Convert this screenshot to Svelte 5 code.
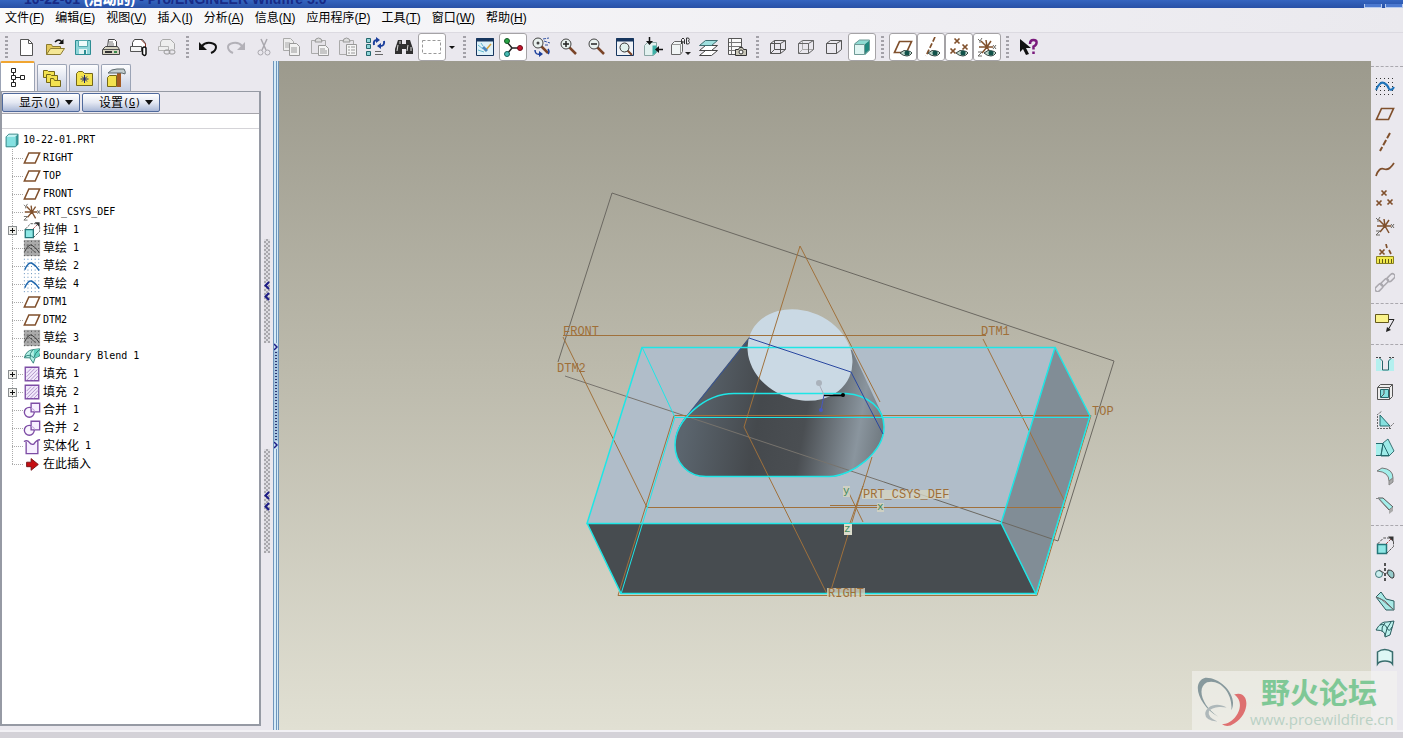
<script>
  const menus = [
    ['文件', 'F'],
    ['编辑', 'E'],
    ['视图', 'V'],
    ['插入', 'I'],
    ['分析', 'A'],
    ['信息', 'N'],
    ['应用程序', 'P'],
    ['工具', 'T'],
    ['窗口', 'W'],
    ['帮助', 'H'],
  ];

  const eye = '<path d="M7 16q4-4 8-2q3 0 4 2q-2 3-5 3q-4 0-7-3z" fill="#b9d3c8" stroke="#3b4a46"/><circle cx="14" cy="16" r="2.500" fill="#12524a"/>';
  const cross = (x, y, c = '#80502c') =>
    `<path d="M${x - 2.5} ${y - 2.5}l5 5m0-5l-5 5" stroke="${c}" stroke-width="1.700"/>`;
  const gridDots = (c) => `<g stroke="${c}" stroke-dasharray="1 3"><path d="M1 2.500h18M1 6.500h18M1 10.500h18M1 14.500h18M1 18.500h18"/></g>`;
  const csys = '<path d="M10 10L4 4M10 10L5 16M10 10h-8M10 10h6M10 10l4-6M10 10l4 7M10 10L9 3" stroke="#80502c" stroke-width="1.500"/><path d="M1 2l2 2 2-3M3 4v2M16 8l3 4m0-4l-3 4M1 15h4l-4 4h4" stroke="#6d6a64"/>';
  const lens = (x, y) => `<path d="M${x + 3} ${y + 3}l7 7" stroke="#7a4428" stroke-width="2.500"/><circle cx="${x}" cy="${y}" r="5" fill="#e9f1ee" stroke="#444"/>`;
  const plane = '<path d="M6.500 4.500h12l-5 11h-12z" stroke="#80502c" stroke-width="1.700"/>';

  // inner markup of every 20x20 icon
  const icons = {
    new: '<path d="M3.500 2.500h8l4 4v12h-12z" fill="#fff" stroke="#555"/><path d="M11.500 2.500v4h4" stroke="#555"/>',
    open: '<path d="M1.500 17.500v-10h5l1 2h8v3" fill="#e4c95c" stroke="#8b7a30"/><path d="M1.500 17.500l4-6h14l-4 6z" fill="#f5e795" stroke="#8b7a30"/><path d="M10 5q4-4 7 0" stroke="#111" stroke-width="1.500"/><path d="M18.500 2v5h-5z" fill="#111"/>',
    save: '<path d="M2.500 3.500h15v14h-15z" fill="#8fd5d9" stroke="#2d8d93"/><path d="M5.500 3.500h9v6h-9z" fill="#eefbfb" stroke="#55a9ae"/><path d="M6 12h8v5H6z" fill="#e3f3f3"/><path d="M11 13h2v4h-2z" fill="#2d8d93"/>',
    print: '<path d="M6.500 10.500l1-8h6l2 2v6" fill="#fff" stroke="#444"/><path d="M8 5h4M8 7h5M8 9h5" stroke="#777"/><path d="M1.500 12.500l3-3h12l2 3v5h-17z" fill="#d6d3c2" stroke="#444"/><path d="M2 12.500h16" stroke="#555"/><path d="M4 15h7" stroke="#333" stroke-width="2"/><path d="M13 15h3" stroke="#3b8a4b" stroke-width="2"/>',
    mail: '<path d="M3.500 9.500v-4l2-3h8l3 4v6h-4" fill="#fff" stroke="#444"/><path d="M1.500 9.500h11v5h-11z" fill="#f4f4f4" stroke="#555"/><path d="M12.500 3l4 4v3" stroke="#8a3526"/><path d="M13.500 17v-6q2-2 3.500 0v6q-1 3-3.500 0z" fill="#fff" stroke="#111" stroke-width="1.500"/>',
    link: '<path d="M3.500 10v-5l2-2.500h8l4 4v6" fill="#eee" stroke="#aaa"/><path d="M1.500 9.500h10v4h-10z" fill="#eee" stroke="#b5b5b5"/><rect x="7" y="13" width="6" height="4" rx="2" stroke="#999"/><rect x="12" y="13" width="6" height="4" rx="2" stroke="#999"/>',
    undo: '<path d="M4 9q3-4 9-3q5 1 5 4q0 4-5 6" stroke="#111" stroke-width="2"/><path d="M1 5v8h8z" fill="#111"/>',
    redo: '<path d="M16 9q-3-4-9-3q-5 1-5 4q0 4 5 6" stroke="#b3b1b8" stroke-width="2"/><path d="M19 5v8h-8z" fill="#b3b1b8"/>',
    cut: '<path d="M7 2l5 11M13 2L8 13" stroke="#a9a7ad" stroke-width="1.500"/><circle cx="6.500" cy="15.500" r="2.500" stroke="#a9a7ad"/><circle cx="13.500" cy="15.500" r="2.500" stroke="#a9a7ad"/>',
    copy: '<path d="M1.500 1.500h7l3 3v9h-10z" fill="#eee" stroke="#aaa"/><path d="M3 6h5M3 8h5M3 10h5" stroke="#aaa"/><path d="M7.500 6.500h7l3 3v9h-10z" fill="#f2f2f2" stroke="#999"/><path d="M9 11h6M9 13h6M9 15h6" stroke="#999"/>',
    paste: '<path d="M1.500 3.500h14v13h-14z" fill="#e6e4e9" stroke="#aaa"/><path d="M5 5q0-4 3.500-4t3.500 4z" fill="#ddd" stroke="#999"/><path d="M8.500 8.500h7l3 3v7h-10z" fill="#f5f5f5" stroke="#999"/><path d="M10 12h5M10 14h7M10 16h7" stroke="#999"/>',
    pasteSpecial: '<path d="M1.500 3.500h14v14h-14z" fill="#e6e4e9" stroke="#aaa"/><path d="M5 5q0-4 3.500-4t3.500 4z" fill="#ddd" stroke="#999"/><path d="M8.500 7.500h10v11h-10z" fill="#f5f5f5" stroke="#999"/><path d="M10 10h2M13 10h4M10 13h2M13 13h4M10 16h2M13 16h4" stroke="#999"/>',
    regen: '<path d="M.500 1.500h4v4h-4zM.500 7.500h4v4h-4zM.500 14.500h4v4h-4z" fill="#8fd5d9" stroke="#24676d"/><path d="M8 8q-1-5 3-5M18 4q1 5-4 5" stroke="#1b3f9c" stroke-width="2"/><path d="M10 0l4 3-4 3zM15 6l-4 3 4 3z" fill="#1b3f9c"/><path d="M9 14.500h6M9 17.500h8" stroke="#666"/>',
    find: '<path d="M4 3h4v4h4V3h4l3 9v5h-7v-5H8v5H1v-5z" fill="#303030"/><path d="M4 8l-1 6M14 8l-1 6M6 4v3M17 10v4" stroke="#ddd"/>',
    select: '<path d="M.500 3.500h18v13h-18z" stroke="#999" stroke-dasharray="3 2"/>',
    repaint: '<path d="M1.500 1.500h17v17h-17z" fill="#dff1f8" stroke="#17365f"/><path d="M1 3h18" stroke="#17365f" stroke-width="3"/><path d="M3 8l5 4M3 13l6 2M6 6l2 3" stroke="#62b8cf"/><path d="M10 14l6-7" stroke="#d69f39" stroke-width="1.500"/><path d="M7 11l4 4 2-2-4-4z" fill="#4a86bd"/>',
    spin: '<path d="M4 5l5 6M4 17l5-6M9 11h8" stroke="#222" stroke-width="1.500"/><circle cx="4" cy="4" r="2.500" fill="#26a444" stroke="#145726"/><circle cx="4" cy="17" r="2.500" fill="#48bdb5" stroke="#14605a"/><circle cx="17" cy="11" r="2.500" fill="#c4132b" stroke="#6d0917"/>',
    reorient: lens(7, 6) + '<circle cx="7" cy="6" r="1.500" fill="#444"/><path d="M12 2l6-1M13 4l6 2M14 8h4" stroke="#3455a5" stroke-dasharray="3 1"/><path d="M4 13q0 5 5 4M17 12q2 3 0 5" stroke="#1b3f9c" stroke-width="1.500"/><path d="M8 14l4 3-4 3z" fill="#1b3f9c"/>',
    zoomIn: lens(7, 7) + '<path d="M4 7h6M7 4v6" stroke="#222" stroke-width="1.500"/>',
    zoomOut: lens(7, 7) + '<path d="M4 7h6" stroke="#222" stroke-width="1.500"/>',
    refit: '<path d="M1.500 1.500h17v17h-17z" fill="#f0f3f7" stroke="#17365f"/><path d="M1 3h18" stroke="#17365f" stroke-width="3"/><path d="M12 13l5 5" stroke="#7a4428" stroke-width="2"/><circle cx="9.500" cy="10.500" r="4.500" fill="#e0f2ee" stroke="#333"/>',
    orient: '<path d="M1.500 8.500l3-3h9v10l-3 3h-9z" fill="#e2f1ef" stroke="#8aa5a3"/><path d="M9.500 8.500h4v7l-4 3z" fill="#3cb0a6"/><path d="M6.500 0v5M20 12.500h-5" stroke="#111" stroke-width="1.500"/><path d="M3 4h7L6.500 8zM16 9v7l-4-3.500z" fill="#111"/>',
    views: '<path d="M.500 7.500l3-3h8v10l-2 3h-9z" fill="#f1f5f5" stroke="#666"/><path d="M.500 7.500h9v10M9.500 7.500l2-3" stroke="#999"/><path d="M10.500 7V2.500q1.500-3 3 0V7M10.500 5h3M15.500 1v6h2q2-1.500 0-3q1.500-1.500 0-3z" stroke="#333"/><path d="M14 15h6l-3 3z" fill="#222"/>',
    layers: '<path d="M.500 18.500l6-5h12l-6 5z" fill="#fff" stroke="#444"/><path d="M.500 13.500l6-5h12l-6 5z" fill="#fff" stroke="#444"/><path d="M.500 8.500l6-5h12l-6 5z" fill="#9fe0df" stroke="#3d6d70"/>',
    viewMgr: '<path d="M1.500 1.500h13v16h-13z" fill="#fafafa" stroke="#555"/><path d="M4.500 2v15M2 5.500h12M2 9.500h12M2 13.500h8" stroke="#777"/><path d="M8.500 12.500h3l1-2h3l1 2h3v6h-11z" fill="#c9c7b8" stroke="#333"/><circle cx="14" cy="15" r="2" fill="#fff" stroke="#333"/>',
    wire: '<path d="M2.500 6.500h10v10h-10zM6.500 3.500h11v9h-11zM2.500 6.500l4-3M12.500 6.500l5-3M2.500 16.500l4-4M12.500 16.500l5-4" stroke="#555"/>',
    hidden: '<path d="M6.500 4v8.500h11M2.500 16.500l4-4" stroke="#aaa"/><path d="M2.500 6.500h10v10h-10zM2.500 6.500l4-3h11v9l-5 4M12.500 6.500l5-3" stroke="#666"/>',
    noHidden: '<path d="M2.500 6.500h10v10h-10zM2.500 6.500l4-3h11v9l-5 4M12.500 6.500l5-3" stroke="#555"/>',
    shaded: '<path d="M2 7h11v11H2z" fill="#dff5f2"/><path d="M2 7l5-4h11l-5 4z" fill="#8edbd3"/><path d="M13 7l5-4v10l-5 5z" fill="#21897f"/><path d="M2.500 7.500h10v10h-10zM2.500 7l5-4h10v10l-5 4" stroke="#6f9a96"/>',
    planes: plane + eye,
    axes: '<path d="M14 0L5 19" stroke="#80502c" stroke-width="1.700" stroke-dasharray="5 2"/>' + eye,
    points: cross(8, 4) + cross(4, 14) + cross(16, 10) + eye,
    csysEye: csys + eye,
    help: '<path d="M2 2v13l3-3 3 6 3-1-3-6h5z" fill="#111"/><path d="M12 7q0-4 3.500-4t3 3q0 2-3 3.500v3M15.500 14.500v2.500" stroke="#7a1a7c" stroke-width="2.500"/>',
    tree: '<path d="M3.500 1.500h4v4h-4zM3.500 8.500h4v4h-4zM3.500 15.500h4v4h-4zM12.500 8.500h4v4h-4zM5.500 5.500v3M5.500 12.500v3M7.500 10.500h5" stroke="#222"/>',
    folders: '<g fill="#f3e24f" stroke="#746719"><path d="M1.500 9.500v-7h4l1 1h6v6z"/><path d="M4.500 14.500v-8h4l1 1h6v7z"/><path d="M8.500 18.500v-8h3l1 2h6v6z"/></g>',
    favorites: '<path d="M2.500 17.500v-12l2-2h4l2 2h8v12z" fill="#f3e24f" stroke="#746719"/><path d="M10.500 7v8M6.500 11h8M8 8.500l5 5M13 8.500l-5 5" stroke="#1c2670"/>',
    hammer: '<path d="M1.500 18.500v-9l2-2h7v11z" fill="#f3e24f" stroke="#746719"/><path d="M11 5h4v14h-4z" fill="#a55b24"/><path d="M2 5q3-4 9-4h7q2 3 1 5l-3-1H9L5 5z" fill="#c3ced0" stroke="#5d696d"/>',
    part: '<path d="M3 6h11v12H3z" fill="#84e1e1"/><path d="M3 6l3-3h11l-3 3z" fill="#c6f5f5"/><path d="M14 6l3-3v12l-3 3z" fill="#37a0a0"/><path d="M3.500 6.500l3-3h10v11l-3 3h-10z" stroke="#3b8485"/>',
    plane,
    csys,
    extrude: '<path d="M2.500 9.500h9v9h-9z" fill="#8fe8e6" stroke="#24777a" stroke-width="1.500"/><path d="M2.500 9l6-6h7M11.500 18.500l7-7v-6" stroke="#555" stroke-dasharray="3 1"/><path d="M11 9l6-6" stroke="#a24a4a" stroke-dasharray="3 1"/><path d="M13 1.500h5.500V7z" fill="#333"/>',
    sketchHidden: '<path d="M1 1h18v18H1z" fill="#aaa"/>' + gridDots('#333') + '<path d="M2 14q4-9 8-7t8 8" stroke="#333"/><path d="M4 7l10 8" stroke="#555"/>',
    sketch: gridDots('#3d75ac') + '<path d="M2 14q4-9 8-7t8 8" stroke="#1f67ad" stroke-width="1.700"/>',
    blend: '<path d="M1.500 12q2-8 9-9l8-1q-2 4 0 8l-5 2-2 6-4-6z" fill="#b4f1e6" stroke="#287c74"/><path d="M12 3l6-1v8l-6 2z" fill="#63d3c2"/><path d="M2 11q5-4 10 1M11 3q-4 4-3 9M18 3q-5 4-6 9" stroke="#287c74"/>',
    fill: '<path d="M2.500 2.500h15v15h-15z" fill="#f1e8fb" stroke="#7d4ca5" stroke-width="1.500"/><path d="M4 9l5-5M4 13l9-9M4 17L16 5M8 17l9-9M12 17l5-5" stroke="#a88bc4"/>',
    merge: '<circle cx="7" cy="12.500" r="5.500" fill="#fbf7ff" stroke="#7d4ca5" stroke-width="1.500"/><path d="M9 2.500h9.500V12H9z" fill="#f7efff" stroke="#7d4ca5" stroke-width="1.500"/><path d="M9 8q4 1 4 4" stroke="#b99bd4"/>',
    solid: '<path d="M3.500 6.500v12h13v-12" fill="#f7efff"/><path d="M1 5q4-2 6 1t5 2q3-5 7-5M3.500 5.500v13h13v-14" stroke="#7d4ca5" stroke-width="1.500"/>',
    insert: '<path d="M4 8h5V4l8 6.500L9 17v-4H4z" fill="#c50e12" stroke="#721114"/>',
    rSketch: gridDots('#333') + '<path d="M1 14q4-9 8-7t5 6q3 2 5-2" stroke="#1d72b8" stroke-width="2"/>',
    axis: '<path d="M15 1L5 19" stroke="#80502c" stroke-width="2" stroke-dasharray="6 2"/>',
    curve: '<path d="M1 16q3-9 8-7t10-6" stroke="#80502c" stroke-width="1.700"/>',
    pts: cross(9, 5) + cross(4, 15) + cross(15, 14),
    measure: '<path d="M1.500 12.500h17v7h-17z" fill="#f1e94d" stroke="#8a8222"/><path d="M4.500 15v4M7.500 15v4M10.500 15v4M13.500 15v4M16.500 15v4" stroke="#635c14"/><path d="M11 0l1 4M14 6l2 4" stroke="#80502c" stroke-width="1.700"/>' + cross(7, 8),
    chain: '<g stroke="#aaa8ae" stroke-width="1.500"><rect x="-1" y="13" width="9" height="5" rx="2.500" transform="rotate(-45 4 15)"/><rect x="5" y="8" width="9" height="4" rx="2" transform="rotate(-45 10 10)"/><rect x="11" y="3" width="9" height="5" rx="2.500" transform="rotate(-45 16 5)"/></g>',
    note: '<path d="M.500 1.500h13v8h-13z" fill="#faf38a" stroke="#64591d"/><path d="M14 6.500h5L13 17" stroke="#222"/><path d="M12 14l-1 5 5-2z" fill="#222"/>',
    hole: '<path d="M1 5h5v11h8V5h5v12H1z" fill="#b4f0ef"/><path d="M1 3.500h5M14 3.500h5" stroke="#444" stroke-dasharray="2 1"/><path d="M4.500 4l3 3v9h6V7l3-3" stroke="#27666a"/>',
    shell: '<path d="M2.500 5.500l3-3h12v12l-3 3h-12z" fill="#ededed" stroke="#555"/><path d="M5.500 7.500h8v8h-8z" fill="#86e1df" stroke="#246a6d"/><path d="M2.500 5.500h12v12M14.500 5.500l3-3M6 15l3-3V8" stroke="#555"/>',
    rib: '<path d="M5 5v11h10z" fill="#86e1df" stroke="#246a6d"/><path d="M2.500 6v12.500H16M2 5l5-4M14 18l5-5" stroke="#666" stroke-dasharray="2 1"/>',
    draft: '<path d="M1 6h7v11H1z" fill="#a5efec"/><path d="M8 5l5-4 6 12-5 5H6z" fill="#9debe8" stroke="#3a7476"/><path d="M1 5.500h7l6 12M1 17.500h13M8 6L6 17" stroke="#246a6d"/>',
    round: '<path d="M2 5l5-3q11 1 11 10l-4 3q0-9-12-10z" fill="#a2eeea" stroke="#777"/><path d="M14 15l4-3v4l-4 3z" fill="#aaa" stroke="#888"/>',
    chamfer: '<path d="M3 4h5l10 9-4 3z" fill="#a2eeea" stroke="#555"/><path d="M14 16l4-3v4l-4 3z" fill="#aaa"/><path d="M1 4.500h3l10 11" stroke="#888"/>',
    mirror: '<path d="M10 0v20" stroke="#222" stroke-width="1.500" stroke-dasharray="3 2"/><circle cx="4" cy="11" r="3.500" fill="#c9eeee" stroke="#42777a"/><path d="M13 7q6 0 6 5t-4 2-2-7z" fill="#97cccc" stroke="#333"/><path d="M4 7l5 3M11 10h2" stroke="#555"/>',
    trim: '<path d="M1 6l5-5 5 7 8 2v9h-8z" fill="#a8e9e6" stroke="#285b5d"/><path d="M1 6l9 4 9 9L6 8z" fill="#fff" stroke="#6b6f70"/>',
    boundary: '<path d="M1 11q5-9 11-8l7-1-4 14-5 2q1-7-9-7z" fill="#bdf2ee" stroke="#285b5d"/><path d="M5 6q5-2 7 3t5-1M10 4q-4 4-3 8M16 3q-5 6-6 14" stroke="#285b5d"/>',
    patch: '<path d="M2.500 5q7-5 15 0v12q-2-3-7.500-3T2.500 17z" fill="#def7f5" stroke="#396d6e" stroke-width="1.500"/>',
  };

  const toolGroups = [
    ['new', 'open', 'save', 'print', 'mail', 'link'],
    ['undo', 'redo', 'cut', 'copy', 'paste', 'pasteSpecial', 'regen', 'find', 'select'],
    ['repaint', 'spin', 'reorient', 'zoomIn', 'zoomOut', 'refit', 'orient', 'views', 'layers', 'viewMgr'],
    ['wire', 'hidden', 'noHidden', 'shaded'],
    ['planes', 'axes', 'points', 'csysEye'],
    ['help'],
  ];

  let pressed = $state(['select', 'spin', 'shaded', 'planes', 'axes', 'points', 'csysEye']);

  const sideGroups = [
    ['rSketch', 'plane', 'axis', 'curve', 'pts', 'csys', 'measure', 'chain'],
    ['note'],
    ['hole', 'shell', 'rib', 'draft', 'round', 'chamfer'],
    ['extrude', 'mirror', 'trim', 'boundary', 'patch'],
  ];

  const tabs = ['tree', 'folders', 'favorites', 'hammer'];
  let activeTab = $state('tree');

  const features = [
    { icon: 'plane', name: 'RIGHT' },
    { icon: 'plane', name: 'TOP' },
    { icon: 'plane', name: 'FRONT' },
    { icon: 'csys', name: 'PRT_CSYS_DEF' },
    { icon: 'extrude', cn: '拉伸', name: ' 1', expandable: true },
    { icon: 'sketchHidden', cn: '草绘', name: ' 1' },
    { icon: 'sketch', cn: '草绘', name: ' 2' },
    { icon: 'sketch', cn: '草绘', name: ' 4' },
    { icon: 'plane', name: 'DTM1' },
    { icon: 'plane', name: 'DTM2' },
    { icon: 'sketchHidden', cn: '草绘', name: ' 3' },
    { icon: 'blend', name: 'Boundary Blend 1' },
    { icon: 'fill', cn: '填充', name: ' 1', expandable: true },
    { icon: 'fill', cn: '填充', name: ' 2', expandable: true },
    { icon: 'merge', cn: '合并', name: ' 1' },
    { icon: 'merge', cn: '合并', name: ' 2' },
    { icon: 'solid', cn: '实体化', name: ' 1' },
    { icon: 'insert', cn: '在此插入', name: '' },
  ];

  function toggle(name) {
    pressed = pressed.includes(name) ? pressed.filter((n) => n !== name) : [...pressed, name];
  }
</script>

{#snippet icon(name)}
  <svg class="icon" viewBox="0 0 20 20" fill="none" aria-hidden="true">{@html icons[name]}</svg>
{/snippet}

<div class="app">
  <header class="titlebar">
    <span class="title">10-22-01 <b>(活动的)</b> - Pro/ENGINEER Wildfire 5.0</span>
    <span class="window-buttons">
      <button aria-label="minimize"></button>
      <button aria-label="maximize"></button>
    </span>
  </header>

  <nav class="menubar">
    {#each menus as [label, key]}
      <button>{label}(<u>{key}</u>)</button>
    {/each}
  </nav>

  <div class="toolbar">
    {#each toolGroups as group}
      <div class="tool-group">
        <span class="grip"></span>
        {#each group as name}
          <button class="tool" class:on={pressed.includes(name)} aria-label={name} onclick={() => toggle(name)}>
            {@render icon(name)}
          </button>
          {#if name === 'select'}
            <button class="drop" aria-label="select options"><span class="caret small"></span></button>
          {/if}
        {/each}
      </div>
    {/each}
  </div>

  <main>
    <aside class="navigator">
      <div class="tabs">
        {#each tabs as tab}
          <button class="tab" class:active={activeTab === tab} aria-label={tab} onclick={() => (activeTab = tab)}>
            {@render icon(tab)}
          </button>
        {/each}
      </div>
      <div class="panel">
        <div class="panel-head">
          <button class="menu-button">显示<span class="key">(<u>O</u>)</span><span class="caret"></span></button>
          <button class="menu-button">设置<span class="key">(<u>G</u>)</span><span class="caret"></span></button>
        </div>
        <div class="column-head"></div>
        <ul class="model-tree">
          <li>{@render icon('part')}<span class="latin">10-22-01.PRT</span></li>
          {#each features as f}
            <li>
              <span class="branch">
                {#if f.expandable}<button class="expand" aria-label="expand"></button>{/if}
              </span>
              {@render icon(f.icon)}{#if f.cn}<span>{f.cn}</span>{/if}<span class="latin">{f.name}</span>
            </li>
          {/each}
        </ul>
      </div>
    </aside>

    <div class="gutter">
      {#each [0, 1] as i (i)}
        <div class="handle">
          <svg viewBox="0 0 6 22" fill="none"><path d="M5 2L1.500 5.500L5 9M5 13L1.500 16.500L5 20" stroke="#1b1b86" stroke-width="2" /></svg>
        </div>
      {/each}
    </div>
    <div class="sash">
      <div class="sash-handle">
        <svg viewBox="0 0 4 8" fill="none"><path d="M0 1L3 4L0 7" stroke="#1b1b86" stroke-width="1.500" /></svg>
        <svg viewBox="0 0 4 8" fill="none"><path d="M0 1L3 4L0 7" stroke="#1b1b86" stroke-width="1.500" /></svg>
      </div>
    </div>

    <section class="viewport">
      <svg class="scene" viewBox="279 61 1092 669" fill="none">
        <defs>
          <linearGradient id="body" gradientUnits="userSpaceOnUse" x1="690" y1="395" x2="890" y2="430">
            <stop offset="0" stop-color="#5b656e" />
            <stop offset="0.35" stop-color="#45494d" />
            <stop offset="0.58" stop-color="#4a4e52" />
            <stop offset="0.85" stop-color="#8a959e" />
            <stop offset="1" stop-color="#6a7379" />
          </linearGradient>
        </defs>

        <!-- base block -->
        <path d="M642 347H1055L1001 523H587z" fill="#b0bdc9" />
        <path d="M1055 347L1090 416L1036 594L1001 523z" fill="#818d96" />
        <path d="M587 523H1001L1036 594H621z" fill="#474c50" />

        <!-- blended boss -->
        <path d="M750 336L687 415C679 424 675 435 675 445C675 463 688 477 706 477H829C852 477 884 452 884 427C884 422 883 416 880 410L852 350z" fill="url(#body)" />
        <path d="M748 340L687 416Q678 426 676 437" stroke="#34539a" />
        <ellipse cx="800" cy="355" rx="54" ry="44" transform="rotate(24 800 355)" fill="#cad9e4" />

        <g stroke="#6b6861">
          <path d="M558 362L612 193L1114 361L1058 541L884 482" />
          <path d="M565 376L884 482" stroke="#77736d" />
        </g>

        <g stroke="#a0713c">
          <path d="M563 335.500H986M563 337L647 507.500H1065M983 339L1064 500" />
          <path d="M674 415.500H1091L1037 595.500H618z" />
          <path d="M880 402L800 246L744 427L827 594M872 457L831 590" />
        </g>

        <g stroke="#1ee6e6">
          <path d="M642 347.500H1055L1001 523.500H587zM1055 347L1090 416L1036 594L1001 523M587 523L621 593.500H1036" stroke-width="1.500" />
          <path d="M642 347L675 417.500H1090M675 417L621 594" />
          <path d="M734 393.500H846C868 395 884 408 884 427C884 452 852 476.500 829 476.500H706C688 476.500 675 463 675 445C675 420 705 393.500 734 393.500z" stroke-width="1.500" />
        </g>

        <path d="M749 338L851 372L883 434" stroke="#2947a0" />

        <!-- spin centre -->
        <path d="M819 384L824 395" stroke="#a9acb8" />
        <circle cx="819" cy="383" r="3" fill="#aab2bb" />
        <path d="M824 395L821 410" stroke="#4858bd" />
        <circle cx="821" cy="410" r="2" fill="#4858bd" />
        <path d="M824 395.500H844" stroke="#000" stroke-width="1.500" />
        <circle cx="843" cy="395" r="2" fill="#000" />

        <!-- default coordinate system -->
        <path d="M830 505.500H882M847 489L863 522M863 486L850 523" stroke="#a0713c" />
        <g fill="#d6d4c2">
          <path d="M862 490h87v9h-87zM843 486h7v11h-7zM877 503h7v9h-7zM827 588h38v9h-38z" fill-opacity="0.800" />
          <path d="M844 524h8v11h-8z" fill="#dcdccc" />
        </g>
        <g class="datum-labels">
          <text x="563" y="335">FRONT</text>
          <text x="557" y="372">DTM2</text>
          <text x="981" y="335">DTM1</text>
          <text x="1092" y="415">TOP</text>
          <text x="863" y="498">PRT_CSYS_DEF</text>
          <text x="828" y="597">RIGHT</text>
          <g class="axis-labels">
            <text x="843" y="494">y</text>
            <text x="877" y="510">x</text>
            <text x="844" y="532">z</text>
          </g>
        </g>
      </svg>
    </section>

    <div class="feature-bar">
      {#each sideGroups as group}
        <div class="feature-group">
          {#each group as name}
            <button class="tool" aria-label={name}>{@render icon(name)}</button>
          {/each}
        </div>
      {/each}
    </div>
  </main>

  <footer class="statusbar"></footer>

  <div class="watermark">
    <svg viewBox="0 0 60 56" fill="none">
      <path d="M40 38C48 22 28 2 12 3C-4 8 6 34 26 45C9 34 2 14 14 8C28 4 42 20 40 38z" fill="#6f858c" />
      <path d="M43 21C60 15 61 42 43 52Q36 57 30 53C45 53 57 30 43 21z" fill="#dc5254" />
      <path d="M35 35C24 28 12 34 12 42Q12 49 25 50Q14 45 16 39C20 34 29 34 35 35z" fill="#a0acb0" />
    </svg>
    <div class="brand">
      <strong>野火论坛</strong>
      <a href="http://www.proewildfire.cn">www.proewildfire.cn</a>
    </div>
  </div>
</div>

<style>
  :global(body) {
    margin: 0;
  }

  .app {
    position: relative;
    display: flex;
    flex-direction: column;
    min-height: 100vh;
    background: #eae8ee;
    color: #000;
    font-family: 'Liberation Sans', 'Noto Sans CJK SC', sans-serif;
    font-size: 12px;
  }

  button {
    margin: 0;
    padding: 0;
    border: 0;
    background: none;
    color: inherit;
    font: inherit;
  }

  .icon {
    display: block;
    flex: none;
    width: 20px;
    height: 20px;
  }

  .titlebar {
    display: flex;
    justify-content: space-between;
    align-items: flex-end;
    height: 8px;
    padding-left: 24px;
    overflow: hidden;
    background: linear-gradient(#3565c0, #2850a6);
  }

  .title {
    color: #182a86;
    font-size: 14px;
    font-weight: bold;
    line-height: 18px;
  }

  .title b {
    color: #fff;
  }

  .window-buttons {
    display: flex;
    gap: 3px;
  }

  .window-buttons button {
    width: 18px;
    height: 4px;
    border: 1px solid #b7cbef;
    border-top: 0;
    background: #4c79d0;
  }

  .menubar {
    display: flex;
    align-items: flex-start;
    gap: 11px;
    height: 24px;
    padding-left: 5px;
    background: linear-gradient(90deg, #fafafb, #f0eff3 60%, #eae9ee);
    line-height: 20px;
  }

  .toolbar {
    display: flex;
    height: 28px;
    border-top: 1px solid #dcdae1;
    background: #eae8ee;
  }

  .tool-group {
    display: flex;
    align-items: center;
  }

  .grip {
    width: 3px;
    height: 22px;
    margin: 0 5px;
    background: repeating-linear-gradient(#a3a1a8 0 2px, transparent 2px 4px);
  }

  .tool {
    display: flex;
    align-items: center;
    justify-content: center;
    box-sizing: border-box;
    width: 28px;
    height: 28px;
  }

  .tool.on {
    border: 1px solid #a5a3a6;
    border-radius: 3px;
    background: #fff;
  }

  .drop {
    display: flex;
    justify-content: center;
    width: 12px;
  }

  .caret {
    border: 4px solid transparent;
    border-top: 5px solid #111;
    border-bottom: 0;
  }

  .caret.small {
    border-width: 3px;
    border-bottom: 0;
  }

  main {
    display: flex;
    flex: 1;
  }

  .navigator {
    display: flex;
    flex-direction: column;
    width: 261px;
    margin-bottom: 4px;
  }

  .tabs {
    display: flex;
    align-items: flex-end;
    gap: 2px;
    height: 30px;
  }

  .tab {
    display: flex;
    align-items: center;
    justify-content: center;
    box-sizing: border-box;
    width: 30px;
    height: 27px;
    border: 1px solid #9ba3b5;
    border-bottom: 0;
    border-radius: 2px 2px 0 0;
    background: linear-gradient(#fdfdfe, #c4cde2);
  }

  .tab.active {
    width: 35px;
    height: 30px;
    border-top: 2px solid #f0a531;
    background: #fff;
  }

  .panel {
    display: flex;
    flex: 1;
    flex-direction: column;
    border: 2px solid #969aa4;
    border-top-width: 1px;
    background: #fff;
  }

  .panel-head {
    display: flex;
    gap: 2px;
    padding: 1px 0;
    background: #eae8ee;
  }

  .menu-button {
    display: flex;
    align-items: center;
    box-sizing: border-box;
    width: 78px;
    height: 19px;
    padding-left: 16px;
    border: 1px solid #506a9c;
    border-radius: 2px;
    background: linear-gradient(#fff, #e4e8f2 50%, #aab8d6);
    line-height: 16px;
  }

  .menu-button .caret {
    margin-left: 4px;
  }

  .key,
  .latin {
    font-family: 'DejaVu Sans Mono', monospace;
    font-size: 10px;
  }

  .column-head {
    height: 14px;
    border-top: 1px solid #a6a5ab;
    border-bottom: 1px solid #d5d4d8;
  }

  .model-tree {
    flex: 1;
    margin: 0;
    padding: 2px 0 0 1px;
    list-style: none;
  }

  .model-tree li {
    display: flex;
    align-items: center;
    height: 18px;
    line-height: 18px;
    white-space: pre;
  }

  .model-tree .icon {
    width: 18px;
    height: 18px;
    margin-right: 2px;
  }

  .branch {
    display: flex;
    align-items: center;
    width: 20px;
    height: 18px;
    background:
      repeating-linear-gradient(#aaa 0 1px, transparent 1px 2px) 9px 0 / 1px 18px no-repeat,
      repeating-linear-gradient(90deg, #aaa 0 1px, transparent 1px 2px) 9px 9px / 11px 1px no-repeat;
  }

  li:last-child .branch {
    background-size: 1px 9px, 11px 1px;
  }

  .expand {
    box-sizing: border-box;
    width: 9px;
    height: 9px;
    margin-left: 5px;
    border: 1px solid #8b8f91;
    background:
      linear-gradient(#111, #111) center / 5px 1px no-repeat,
      linear-gradient(#111, #111) center / 1px 5px no-repeat,
      #f0f0ec;
  }

  .gutter {
    display: flex;
    flex-direction: column;
    align-items: center;
    justify-content: center;
    gap: 106px;
    width: 12px;
  }

  .handle {
    display: flex;
    align-items: center;
    width: 6px;
    height: 104px;
    background: repeating-conic-gradient(#a9a8ad 0 25%, #dddce1 0 50%) 0 0 / 4px 4px;
  }

  .handle svg {
    width: 6px;
    height: 22px;
  }

  .sash {
    display: flex;
    align-items: center;
    box-sizing: border-box;
    width: 6px;
    border: 1px solid #6f95bb;
    border-width: 0 1px;
    background: linear-gradient(90deg, #d5ebf8 0 2px, #6f95bb 2px 3px, #d5ebf8 3px);
  }

  .sash-handle {
    display: flex;
    flex-direction: column;
    justify-content: space-between;
    width: 4px;
    height: 106px;
    background:
      repeating-linear-gradient(#2a3470 0 1px, transparent 1px 3px) 1px 0 / 2px 100% no-repeat,
      #a8c5df;
  }

  .sash-handle svg {
    width: 4px;
    height: 8px;
    background: #c6dff0;
  }

  .viewport {
    flex: 1;
    min-width: 0;
    background: linear-gradient(#9c9a8d, #bbb9ab 45%, #e1e0d3);
  }

  .scene {
    display: block;
    width: 100%;
    height: 100%;
  }

  .datum-labels {
    fill: #9f6f38;
    font-family: 'Liberation Mono', monospace;
    font-size: 12px;
  }

  .axis-labels {
    fill: #3f8a5b;
    font-size: 11px;
  }

  .feature-bar {
    display: flex;
    flex-direction: column;
    gap: 7px;
    width: 32px;
    padding-top: 5px;
  }

  .feature-group {
    padding-top: 5px;
    border-top: 1px dashed #aaa8ae;
  }

  .statusbar {
    height: 6px;
    border-top: 2px solid #f2f1f5;
    background: #d4d2d8;
  }

  .watermark {
    position: absolute;
    right: 6px;
    bottom: 7px;
    display: flex;
    align-items: center;
    box-sizing: border-box;
    width: 205px;
    height: 60px;
    padding-left: 2px;
    background: rgba(244, 243, 240, 0.6);
  }

  .watermark svg {
    flex: none;
    width: 56px;
    height: 56px;
    opacity: 0.8;
  }

  .brand {
    display: flex;
    flex-direction: column;
  }

  .brand strong {
    padding-left: 11px;
    color: #7fc896;
    font-family: 'Noto Sans CJK SC', sans-serif;
    font-size: 29px;
    line-height: 36px;
  }

  .brand a {
    color: #b9d1c4;
    font-family: 'Open Sans', sans-serif;
    font-size: 15px;
    line-height: 20px;
    text-decoration: none;
  }
</style>
